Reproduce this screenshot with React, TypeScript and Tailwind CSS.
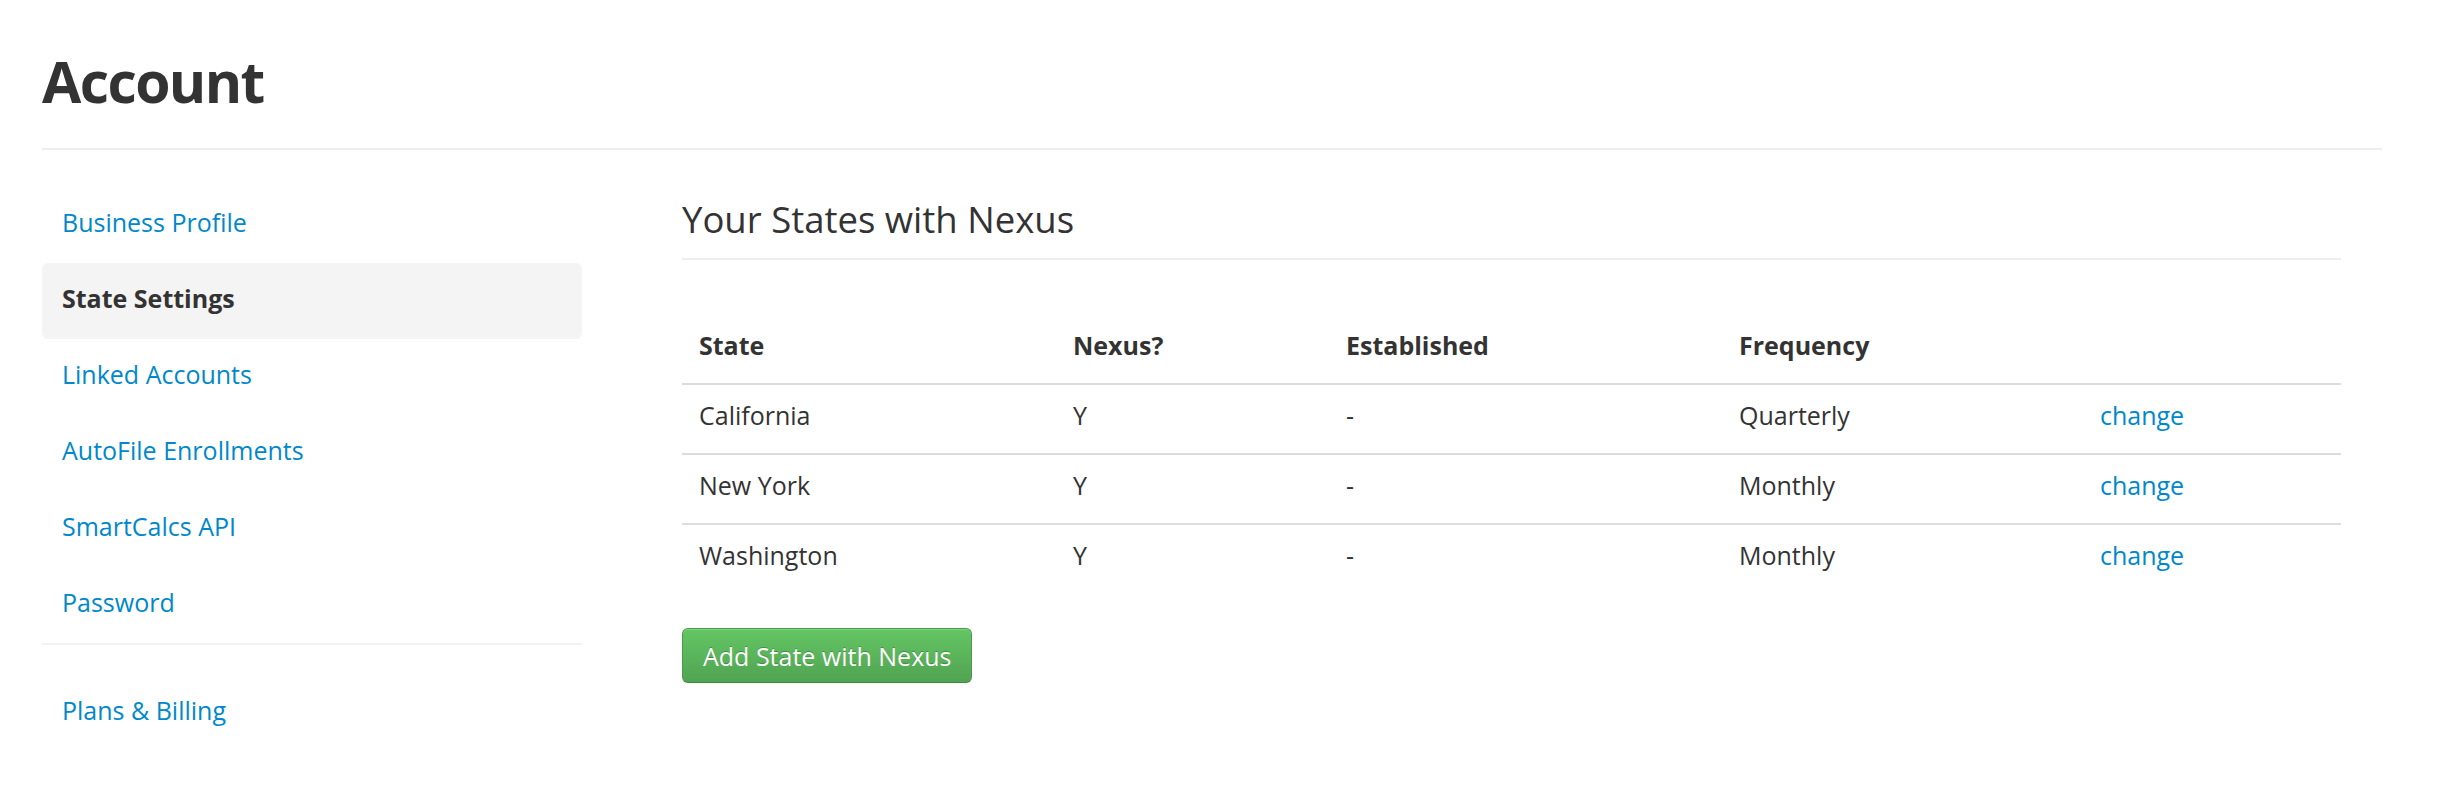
import React from "react";

const navItems = [
  { label: "Business Profile", active: false },
  { label: "State Settings", active: true },
  { label: "Linked Accounts", active: false },
  { label: "AutoFile Enrollments", active: false },
  { label: "SmartCalcs API", active: false },
  { label: "Password", active: false },
];

const rows = [
  { state: "California", nexus: "Y", est: "-", freq: "Quarterly" },
  { state: "New York", nexus: "Y", est: "-", freq: "Monthly" },
  { state: "Washington", nexus: "Y", est: "-", freq: "Monthly" },
];

const cols = "grid grid-cols-[374px_273px_393px_361px_1fr]";

export default function App() {
  return (
    <div
      className="min-h-[810px] bg-white text-[#333333]"
      style={{ fontFamily: '"Open Sans", "Noto Sans", sans-serif' }}
    >
      <div className="mx-[42px] w-[2340px]">
        <header className="border-b-2 border-[#eeeeee] pt-[53px] pb-[38px]">
          <h1 className="text-[57px] font-bold leading-[57px] tracking-[-1.6px]">Account</h1>
        </header>

        <div className="flex">
          <aside className="w-[540px] shrink-0 pt-[37px]">
            <nav className="flex flex-col">
              {navItems.map((item) =>
                item.active ? (
                  <div
                    key={item.label}
                    className="h-[76px] rounded-[6px] bg-[#f4f4f4] px-[20px] pt-[17px] text-[25px] font-bold leading-[36px] text-[#333333]"
                  >
                    {item.label}
                  </div>
                ) : (
                  <a
                    key={item.label}
                    href="#"
                    className="h-[76px] px-[20px] pt-[17px] text-[25px] leading-[36px] text-[#0088cc]"
                  >
                    {item.label}
                  </a>
                )
              )}
            </nav>
            <div className="h-[2px] bg-[#f2f2f2]" />
            <a
              href="#"
              className="mt-[30px] block h-[76px] px-[20px] pt-[17px] text-[25px] leading-[36px] text-[#0088cc]"
            >
              Plans &amp; Billing
            </a>
          </aside>

          <main className="ml-[100px] w-[1659px] pt-[47px]">
            <h2 className="border-b-2 border-[#eeeeee] pb-[17px] text-[36.5px] leading-[44px]">
              Your States with Nexus
            </h2>

            <div className="mt-[54px] text-[25px] leading-[36px]">
              <div className={`${cols} h-[69px] pt-[13px] font-bold`}>
                <div className="pl-[17px]">State</div>
                <div className="pl-[17px]">Nexus?</div>
                <div className="pl-[17px]">Established</div>
                <div className="pl-[17px]">Frequency</div>
                <div />
              </div>
              {rows.map((r) => (
                <div key={r.state} className={`${cols} h-[70px] border-t-2 border-[#dddddd] pt-[12px]`}>
                  <div className="pl-[17px]">{r.state}</div>
                  <div className="pl-[17px]">{r.nexus}</div>
                  <div className="pl-[17px]">{r.est}</div>
                  <div className="pl-[17px]">{r.freq}</div>
                  <div className="pl-[17px]">
                    <a href="#" className="text-[#0088cc]">change</a>
                  </div>
                </div>
              ))}
            </div>

            <button
              type="button"
              className="mt-[35px] h-[55px] rounded-[6px] border border-[#4b9a4b] border-b-[#3f8a3f] bg-gradient-to-b from-[#64c664] to-[#51a351] px-[20px] text-[25px] leading-[36px] text-white shadow-[inset_0_1px_0_rgba(255,255,255,0.2),0_1px_2px_rgba(0,0,0,0.05)]"
              style={{ textShadow: "0 -1px 0 rgba(0,0,0,0.25)" }}
            >
              Add State with Nexus
            </button>
          </main>
        </div>
      </div>
    </div>
  );
}
